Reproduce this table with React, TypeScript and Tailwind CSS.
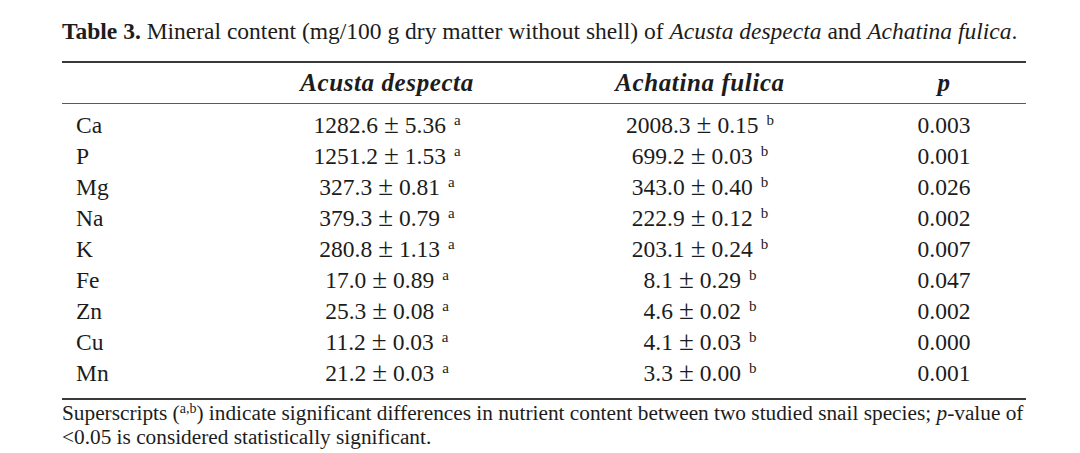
const rows: [string, string, string, string][] = [
  ['Ca', '1282.6', '5.36', '2008.3', '0.15', '0.003'],
  ['P', '1251.2', '1.53', '699.2', '0.03', '0.001'],
  ['Mg', '327.3', '0.81', '343.0', '0.40', '0.026'],
  ['Na', '379.3', '0.79', '222.9', '0.12', '0.002'],
  ['K', '280.8', '1.13', '203.1', '0.24', '0.007'],
  ['Fe', '17.0', '0.89', '8.1', '0.29', '0.047'],
  ['Zn', '25.3', '0.08', '4.6', '0.02', '0.002'],
  ['Cu', '11.2', '0.03', '4.1', '0.03', '0.000'],
  ['Mn', '21.2', '0.03', '3.3', '0.00', '0.001'],
] as any;

function Value({ mean, sd, mark }: { mean: string; sd: string; mark: string }) {
  return (
    <span className="whitespace-nowrap">
      {mean}
      <span className="mx-[6px] text-[27px] leading-none">±</span>
      {sd}
      <span className="ml-[8px] text-[15px] leading-none relative -top-[8px]">{mark}</span>
    </span>
  );
}

export default function App() {
  return (
    <div
      className="w-[1080px] h-[453px] bg-white text-[#1c1c1c] overflow-hidden"
      style={{ fontFamily: '"Liberation Serif", "DejaVu Serif", serif' }}
    >
      <div className="pl-[62px] w-[1026px]">
        {/* caption */}
        <p className="pt-[18px] text-[23.5px] leading-[26px] whitespace-nowrap">
          <span className="font-bold">Table 3.</span> Mineral content (mg/100 g dry matter without shell) of{' '}
          <i>Acusta despecta</i> and <i>Achatina fulica</i>.
        </p>

        {/* table */}
        <div className="mt-[17px] border-t-2 border-b-2 border-[#3a3a3a]">
          <div className="grid grid-cols-[174px_302px_324px_164px] h-[41px] items-center border-b border-[#5a5a5a] text-[25px] tracking-[0.6px] font-bold italic">
            <div />
            <div className="text-center">Acusta despecta</div>
            <div className="text-center">Achatina fulica</div>
            <div className="text-center">p</div>
          </div>
          <div className="pt-[6px] pb-[9px]">
            {rows.map(([el, a, asd, b, bsd, p]: string[]) => (
              <div key={el} className="grid grid-cols-[174px_302px_324px_164px] h-[31px] items-center text-[23.5px] leading-[31px]">
                <div className="pl-[14px]">{el}</div>
                <div className="text-center">
                  <Value mean={a} sd={asd} mark="a" />
                </div>
                <div className="text-center">
                  <Value mean={b} sd={bsd} mark="b" />
                </div>
                <div className="text-center">{p}</div>
              </div>
            ))}
          </div>
        </div>

        {/* footnote */}
        <p className="pt-[1px] text-[21.3px] leading-[24px] whitespace-nowrap">
          Superscripts (<span className="text-[14px] leading-none relative -top-[7px]">a,b</span>) indicate significant
          differences in nutrient content between two studied snail species; <i>p</i>-value of
          <br />
          &lt;0.05 is considered statistically significant.
        </p>
      </div>
    </div>
  );
}
